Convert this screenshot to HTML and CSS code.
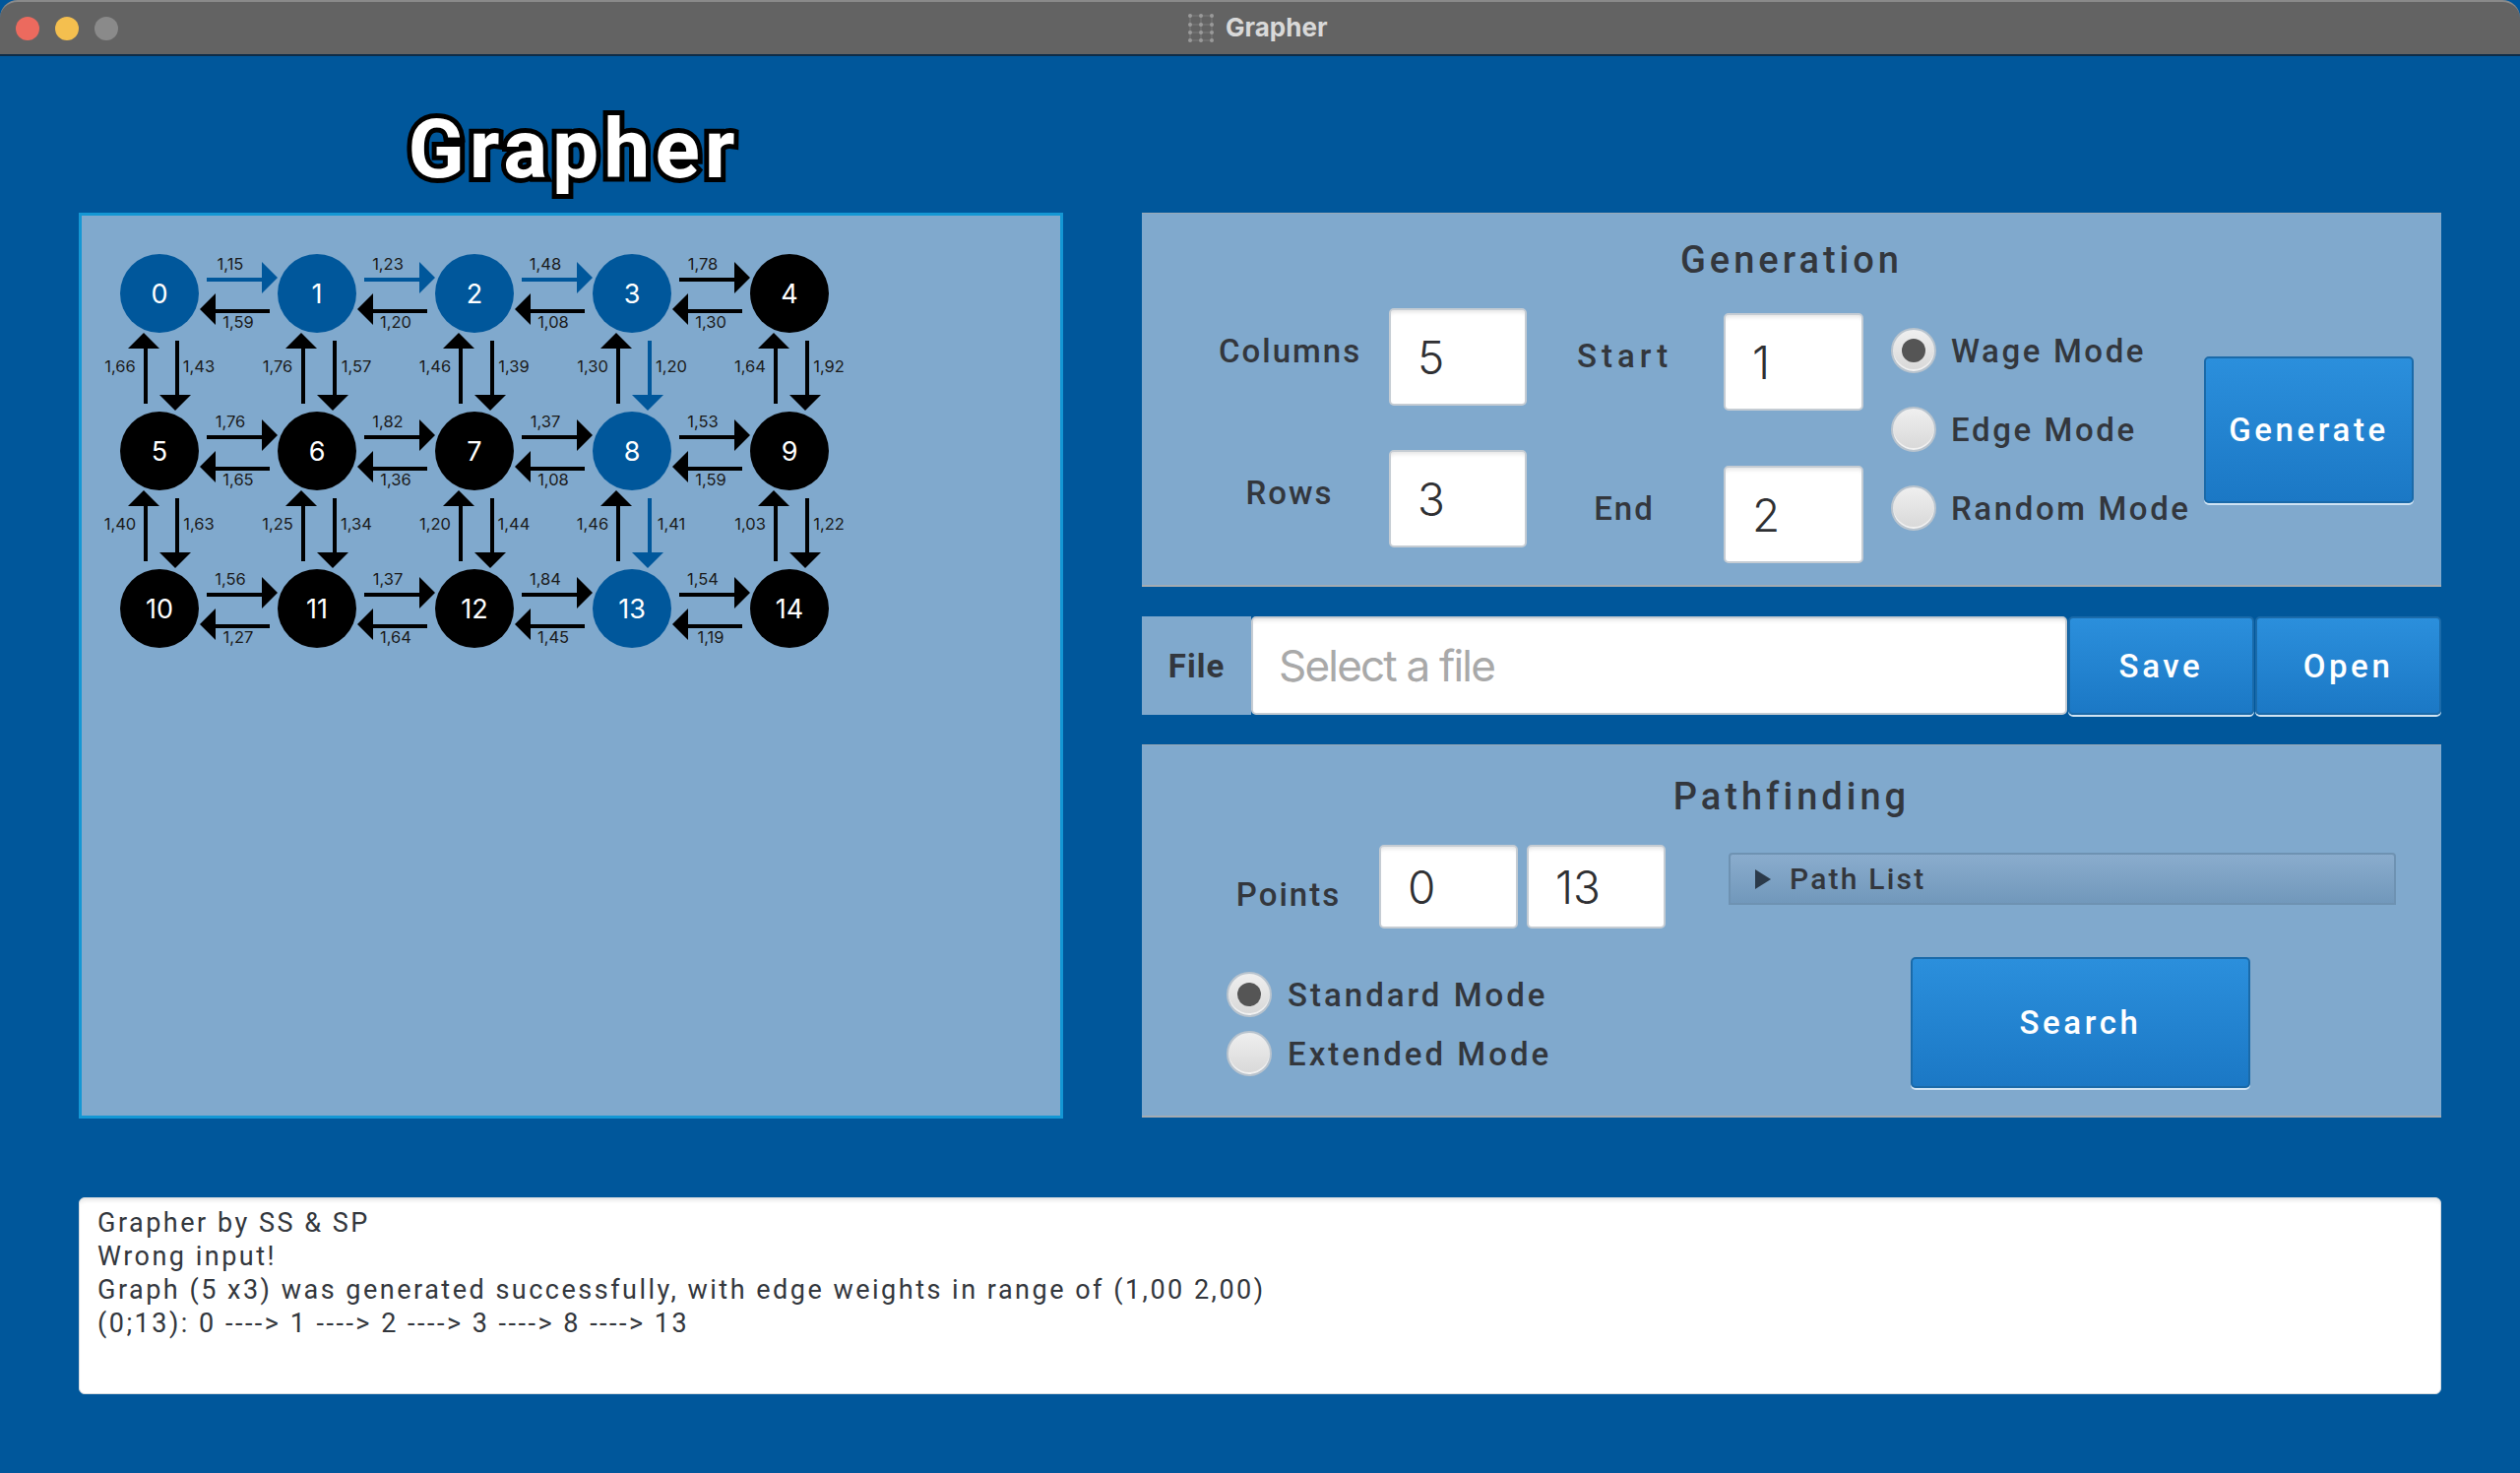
FILE: index.html
```html
<!DOCTYPE html>
<html lang="en">

<head>
  <meta charset="UTF-8">
  <title>Grapher</title>
  <link rel="stylesheet" href="styles.css">
</head>

<body>
  <div class="window">
    <div class="titlebar">
      <div class="lights">
        <span class="light red"></span>
        <span class="light yellow"></span>
        <span class="light grey"></span>
      </div>
      <div class="window-title">
        <svg class="grip" width="28" height="30" viewBox="0 0 28 30">
          <g stroke="#7c7c7c" stroke-width="1">
            <line x1="3" y1="3" x2="25" y2="3"/><line x1="3" y1="12" x2="25" y2="12"/>
            <line x1="3" y1="20" x2="25" y2="20"/><line x1="3" y1="28" x2="25" y2="28"/>
            <line x1="3" y1="3" x2="3" y2="28"/><line x1="14" y1="3" x2="14" y2="28"/><line x1="25" y1="3" x2="25" y2="28"/>
          </g>
          <g fill="#9a9a9a">
            <circle cx="3" cy="3" r="2"/><circle cx="14" cy="3" r="2"/><circle cx="25" cy="3" r="2"/>
            <circle cx="3" cy="12" r="2"/><circle cx="14" cy="12" r="2"/><circle cx="25" cy="12" r="2"/>
            <circle cx="3" cy="20" r="2"/><circle cx="14" cy="20" r="2"/><circle cx="25" cy="20" r="2"/>
            <circle cx="3" cy="28" r="2"/><circle cx="14" cy="28" r="2"/><circle cx="25" cy="28" r="2"/>
          </g>
        </svg>
        <span>Grapher</span>
      </div>
    </div>

    <div class="content">
      <div class="left-col">
        <h1 class="app-title">Grapher</h1>
        <div class="graph-panel">
          <svg id="graph" width="994" height="914" viewBox="0 0 994 914"></svg>
        </div>
      </div>

      <div class="right-col">
        <section class="panel generation">
          <h2 class="panel-title">Generation</h2>
          <div class="gen-body">
            <div class="field-grid size-fields">
              <label class="field-label">Columns</label>
              <div class="textfield">5</div>
              <label class="field-label">Rows</label>
              <div class="textfield">3</div>
            </div>
            <div class="field-grid range-fields">
              <label class="field-label start-label">Start</label>
              <div class="textfield">1</div>
              <label class="field-label">End</label>
              <div class="textfield">2</div>
            </div>
            <div class="radios gen-radios">
              <div class="radio-row"><span class="radio checked"></span>Wage Mode</div>
              <div class="radio-row"><span class="radio"></span>Edge Mode</div>
              <div class="radio-row"><span class="radio"></span>Random Mode</div>
            </div>
            <button class="btn generate-btn">Generate</button>
          </div>
        </section>

        <section class="file-row">
          <div class="file-label">File</div>
          <div class="textfield file-input">Select a file</div>
          <button class="btn file-btn">Save</button>
          <button class="btn file-btn">Open</button>
        </section>

        <section class="panel pathfinding">
          <h2 class="panel-title">Pathfinding</h2>
          <div class="path-top">
            <label class="field-label points-label">Points</label>
            <div class="textfield point-input">0</div>
            <div class="textfield point-input">13</div>
            <div class="path-list"><span class="arrow-right"></span>Path List</div>
          </div>
          <div class="path-bottom">
            <div class="radios path-radios">
              <div class="radio-row"><span class="radio checked"></span>Standard Mode</div>
              <div class="radio-row"><span class="radio"></span>Extended Mode</div>
            </div>
            <button class="btn search-btn">Search</button>
          </div>
        </section>
      </div>
    </div>

    <div class="console">
      <div>Grapher by SS &amp; SP</div>
      <div>Wrong input!</div>
      <div>Graph (5 x3) was generated successfully, with edge weights in range of (1,00 2,00)</div>
      <div>(0;13): 0 ----&gt; 1 ----&gt; 2 ----&gt; 3 ----&gt; 8 ----&gt; 13</div>
    </div>
  </div>

  <script src="graph.js"></script>
</body>

</html>
```

FILE: styles.css
```css
* {
  margin: 0;
  padding: 0;
  box-sizing: border-box;
}

body {
  font-family: Roboto, "Liberation Sans", sans-serif;
  font-weight: 500;
  background-color: #00579b;
  color: #33373d;
}

.window {
  width: 2560px;
  height: 1496px;
  background-color: #00579b;
  overflow: hidden;
}

/* mac title bar */
.titlebar {
  height: 57px;
  background-color: #636363;
  border-top: 2px solid #8a8a8a;
  border-bottom: 2px solid #0e2c47;
  border-radius: 18px 18px 0 0;
  display: flex;
  align-items: center;
  position: relative;
}

.lights {
  display: flex;
  gap: 16px;
  padding-left: 16px;
}

.light {
  width: 24px;
  height: 24px;
  border-radius: 50%;
}

.red { background-color: #ec6a5e; }
.yellow { background-color: #f4bf4f; }
.grey { background-color: #8a8a8a; }

.window-title {
  position: absolute;
  left: 1206px;
  top: -1px;
  height: 53px;
  display: flex;
  align-items: center;
  gap: 11px;
  color: #d9d9d9;
  font-family: Inter, sans-serif;
  font-size: 26px;
  font-weight: 700;
}

.content {
  display: flex;
  padding-left: 80px;
}

.left-col {
  width: 1000px;
}

.app-title {
  height: 159px;
  padding-top: 50px;
  padding-left: 6px;
  text-align: center;
  font-size: 84px;
  font-weight: 700;
  line-height: 90px;
  letter-spacing: 5px;
  color: #fff;
  -webkit-text-stroke: 10px #000;
  paint-order: stroke fill;
  text-shadow: 2px 4px 0 #000;
}

.graph-panel {
  height: 920px;
  background-color: #80a9cd;
  border: 3px solid #1497d4;
}

#graph {
  display: block;
}

#graph text {
  font-family: Inter, sans-serif;
  font-weight: 400;
}

.right-col {
  width: 1320px;
  margin-left: 80px;
  padding-top: 159px;
}

.panel {
  width: 1320px;
  background-color: #80a9cd;
  border-top: 1px solid #9aa9b6;
  border-bottom: 2px solid #a3abb2;
}

.generation {
  height: 380px;
}

.pathfinding {
  height: 379px;
  margin-top: 30px;
}

.panel-title {
  text-align: center;
  font-size: 38px;
  font-weight: 500;
  letter-spacing: 4px;
  line-height: 44px;
  padding-top: 25px;
}

.pathfinding .panel-title {
  padding-top: 30px;
}

.gen-body {
  display: flex;
  align-items: flex-start;
  margin-top: 27px;
}

.field-grid {
  display: grid;
  align-items: center;
}

.size-fields {
  grid-template-columns: 144px 140px;
  column-gap: 29px;
  row-gap: 45px;
  margin-left: 78px;
}

.range-fields {
  grid-template-columns: 96px 142px;
  column-gap: 53px;
  row-gap: 56px;
  margin-left: 51px;
  margin-top: 5px;
}

.field-label {
  font-size: 33px;
  letter-spacing: 2px;
  text-align: center;
  white-space: nowrap;
}

.field-grid .field-label {
  padding-bottom: 12px;
}

.start-label {
  letter-spacing: 5px;
}

.textfield {
  height: 99px;
  background-color: #fff;
  border: 2px solid #c5ccd3;
  border-radius: 5px;
  box-shadow: inset 0 5px 4px -3px #e4e4e4;
  padding-left: 27px;
  font-family: Inter, sans-serif;
  font-size: 46px;
  font-weight: 300;
  color: #2f3033;
  display: flex;
  align-items: center;
}

.radios {
  display: flex;
  flex-direction: column;
}

.radio-row {
  display: flex;
  align-items: center;
  gap: 15px;
  font-size: 33px;
  letter-spacing: 2.6px;
  white-space: nowrap;
}

.radio {
  width: 46px;
  height: 46px;
  border-radius: 50%;
  border: 2px solid #b9c4ce;
  background: linear-gradient(#efefef, #d8d8d8);
  box-shadow: inset 0 -2px 0 #f1f1f1;
  flex-shrink: 0;
  display: flex;
  align-items: center;
  justify-content: center;
}

.radio.checked::after {
  content: "";
  width: 24px;
  height: 24px;
  border-radius: 50%;
  background-color: #555;
}

.gen-radios {
  gap: 34px;
  margin-left: 28px;
  margin-top: 20px;
  width: 318px;
}

.btn {
  font-family: Roboto, "Liberation Sans", sans-serif;
  font-size: 33px;
  font-weight: 500;
  letter-spacing: 3.6px;
  color: #fff;
  background: linear-gradient(#2b8fdc, #1b78c5);
  border: 2px solid #1a6aa9;
  border-radius: 5px;
  box-shadow: 0 2px 0 #cfe3f3;
}

.generate-btn {
  width: 213px;
  height: 149px;
  margin-top: 49px;
}

.file-row {
  display: flex;
  height: 100px;
  margin-top: 30px;
}

.file-label {
  width: 111px;
  background-color: #80a9cd;
  font-size: 33px;
  font-weight: 700;
  letter-spacing: 1px;
  text-align: center;
  line-height: 102px;
}

.file-input {
  width: 829px;
  height: 100px;
  padding-left: 26px;
  color: #a9a9a9;
  font-size: 44px;
  font-weight: 400;
  letter-spacing: -1.8px;
}

.file-btn {
  width: 189px;
  height: 100px;
  margin-left: 1px;
}

.path-top {
  display: flex;
  align-items: flex-start;
  margin-top: 27px;
}

.points-label {
  width: 110px;
  margin-left: 94px;
  margin-top: 31px;
}

.point-input {
  width: 141px;
  height: 85px;
  margin-left: 9px;
}

.points-label + .point-input {
  margin-left: 37px;
}

.path-list {
  width: 678px;
  height: 53px;
  margin-left: 64px;
  margin-top: 8px;
  display: flex;
  align-items: center;
  gap: 19px;
  padding-left: 25px;
  font-size: 30px;
  letter-spacing: 2.2px;
  background: linear-gradient(#8aaccd, #7198bb);
  border: 2px solid #6e92b2;
  border-radius: 4px 4px 0 0;
}

.arrow-right {
  width: 0;
  height: 0;
  border-left: 16px solid #2b3a4a;
  border-top: 10px solid transparent;
  border-bottom: 10px solid transparent;
}

.path-bottom {
  display: flex;
  align-items: flex-start;
  margin-top: 29px;
}

.path-radios {
  gap: 14px;
  margin-left: 86px;
  margin-top: 15px;
  width: 695px;
}

.path-radios .radio-row {
  gap: 16px;
  letter-spacing: 3px;
}

.search-btn {
  width: 345px;
  height: 133px;
}

.console {
  width: 2400px;
  height: 200px;
  margin: 80px 0 0 80px;
  padding: 8px 18px;
  background-color: #fff;
  border: 1px solid #d5dbe0;
  border-radius: 6px;
  box-shadow: inset 0 5px 4px -3px #e4e4e4;
  font-size: 27px;
  font-weight: 400;
  line-height: 34px;
  letter-spacing: 2.5px;
  color: #33373d;
}
```

FILE: graph.js
```js
const SVG_NS = "http://www.w3.org/2000/svg";
const svg = document.getElementById("graph");

const BLUE = "#00579b";
const BLACK = "#000";
const COLS = 5;
const ROWS = 3;
// first node sits at 162,298 on the page, panel inner origin is 83,219
const START_X = 79;
const START_Y = 79;
const STEP = 160;

const pathNodes = [0, 1, 2, 3, 8, 13];
const pathEdges = ["0-1", "1-2", "2-3", "3-8", "8-13"];

// [to right, to left] for each row
const horizontal = [
  ["1,15", "1,59", "1,23", "1,20", "1,48", "1,08", "1,78", "1,30"],
  ["1,76", "1,65", "1,82", "1,36", "1,37", "1,08", "1,53", "1,59"],
  ["1,56", "1,27", "1,37", "1,64", "1,84", "1,45", "1,54", "1,19"]
];

// [up, down] between two rows
const vertical = [
  ["1,66", "1,43", "1,76", "1,57", "1,46", "1,39", "1,30", "1,20", "1,64", "1,92"],
  ["1,40", "1,63", "1,25", "1,34", "1,20", "1,44", "1,46", "1,41", "1,03", "1,22"]
];

function add(name, attrs, text) {
  const el = document.createElementNS(SVG_NS, name);
  for (const key in attrs) {
    el.setAttribute(key, attrs[key]);
  }
  if (text !== undefined) {
    el.textContent = text;
  }
  svg.appendChild(el);
}

// the head is centred 2px off the shaft, same as in the app
function arrow(x1, y1, x2, y2, color) {
  const dx = Math.sign(x2 - x1);
  const dy = Math.sign(y2 - y1);
  const baseX = x2 - dx * 16;
  const baseY = y2 - dy * 16;
  add("line", { x1: x1, y1: y1, x2: x2 - dx * 4, y2: y2 - dy * 4, stroke: color, "stroke-width": 4 });
  const points = dy === 0
    ? [x2, y2 - 2, baseX, y2 - 18, baseX, y2 + 14]
    : [x2 - 2, y2, x2 - 18, baseY, x2 + 14, baseY];
  add("polygon", { points: points.join(","), fill: color });
}

function label(x, y, text) {
  add("text", { x: x, y: y, "text-anchor": "middle", "font-size": 16.5, fill: "#1a1a1a" }, text);
}

function edgeColor(a, b) {
  return pathEdges.includes(a + "-" + b) ? BLUE : BLACK;
}

for (let r = 0; r < ROWS; r++) {
  for (let c = 0; c < COLS; c++) {
    const x = START_X + c * STEP;
    const y = START_Y + r * STEP;
    const id = r * COLS + c;

    if (c < COLS - 1) {
      arrow(x + 48, y - 14, x + 120, y - 14, edgeColor(id, id + 1));
      arrow(x + 112, y + 18, x + 41, y + 18, edgeColor(id + 1, id));
      label(x + 72, y - 24, horizontal[r][c * 2]);
      label(x + 80, y + 35, horizontal[r][c * 2 + 1]);
    }

    if (r < ROWS - 1) {
      arrow(x - 14, y + 112, x - 14, y + 40, edgeColor(id + COLS, id));
      arrow(x + 18, y + 48, x + 18, y + 119, edgeColor(id, id + COLS));
      label(x - 40, y + 80, vertical[r][c * 2]);
      label(x + 40, y + 80, vertical[r][c * 2 + 1]);
    }

    add("circle", { cx: x, cy: y, r: 40, fill: pathNodes.includes(id) ? BLUE : BLACK });
    add("text", { x: x, y: y + 10, "text-anchor": "middle", "font-size": 27, fill: "#fff" }, id);
  }
}
```
